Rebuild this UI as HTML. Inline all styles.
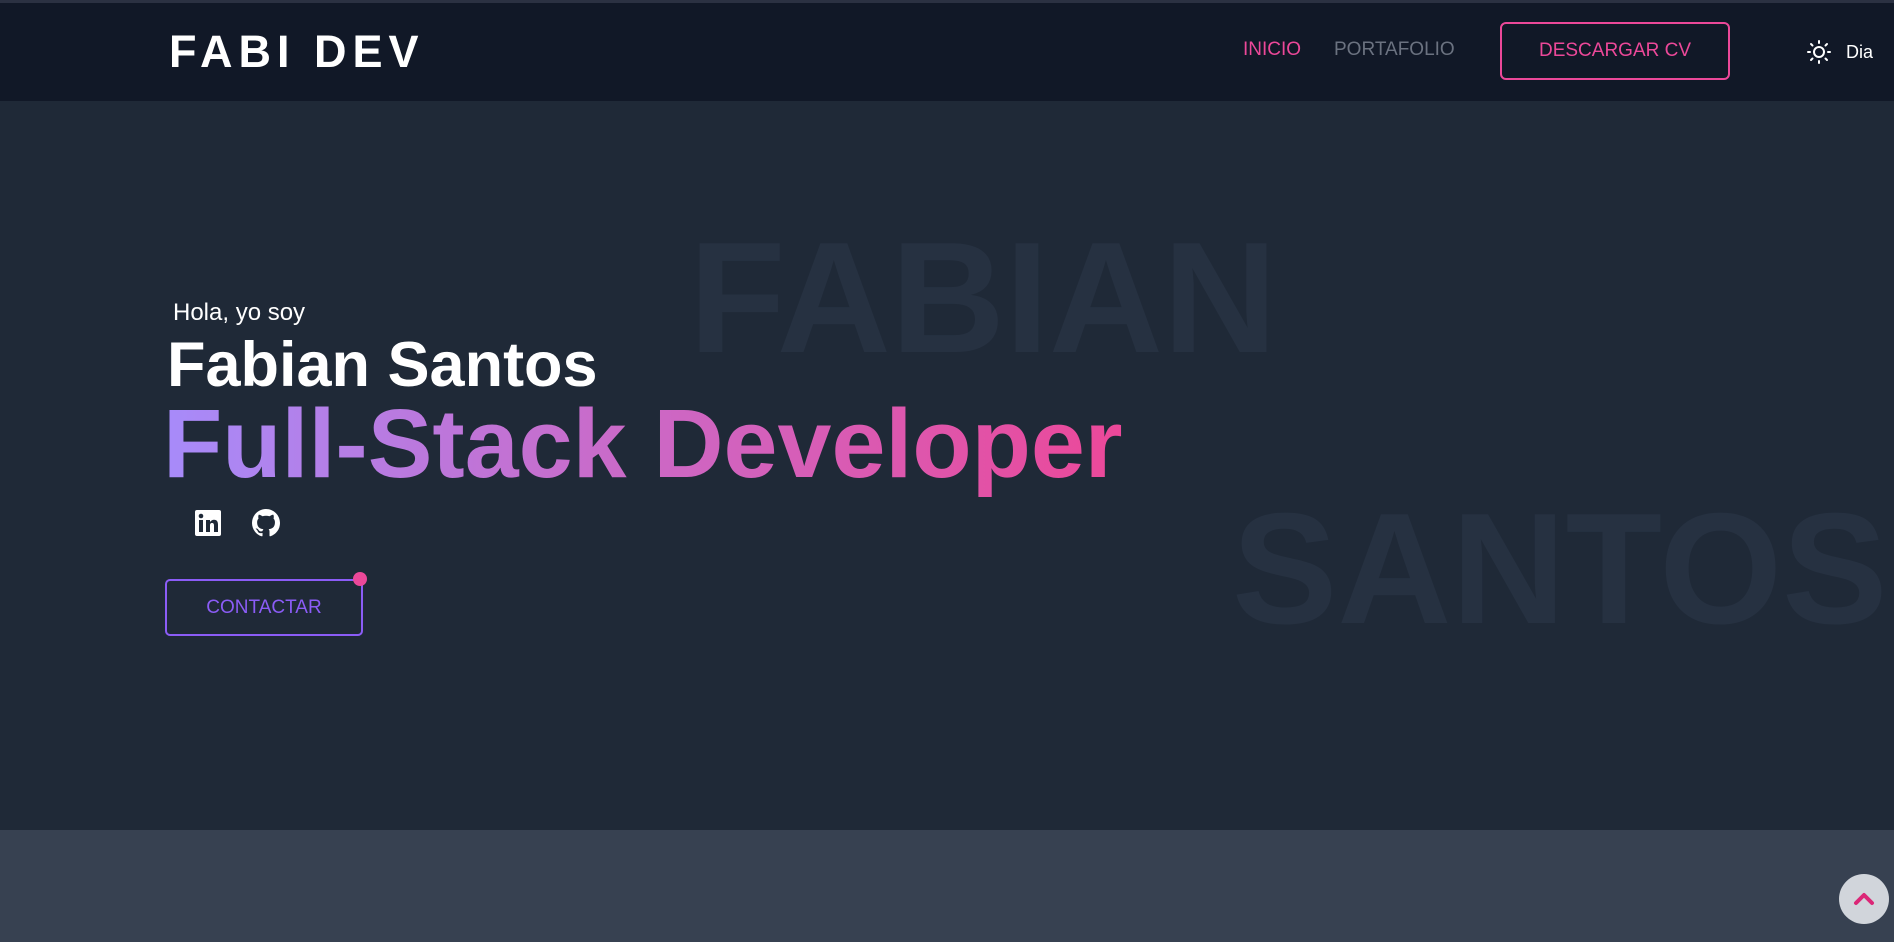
<!DOCTYPE html>
<html><head><meta charset="utf-8"><style>
*{margin:0;padding:0;box-sizing:border-box}
body{width:1894px;height:942px;overflow:hidden;background:#1f2937;font-family:"Liberation Sans",sans-serif;position:relative}
.nav{position:absolute;left:0;top:0;width:1894px;height:101px;background:#111827;border-top:3px solid #2b3142}
.hero{position:absolute;left:0;top:101px;width:1894px;height:729px;background:#1f2937}
.bottom{position:absolute;left:0;top:830px;width:1894px;height:112px;background:#374151}
.abs{position:absolute;white-space:nowrap}
</style></head><body>
<div class="nav"></div>
<div class="hero"></div>
<div class="bottom"></div>
<div class="abs" style="left:169px;top:29px;font-size:45px;font-weight:bold;color:#fff;letter-spacing:6px;line-height:46px">FABI DEV</div>
<div class="abs" style="left:1243px;top:39px;font-size:19px;color:#ec4899;line-height:22px">INICIO</div>
<div class="abs" style="left:1334px;top:39px;font-size:19px;color:#6b7280;line-height:22px">PORTAFOLIO</div>
<div class="abs" style="left:1500px;top:22px;width:230px;height:58px;border:2px solid #ec4899;border-radius:6px;color:#ec4899;font-size:19px;line-height:54px;text-align:center">DESCARGAR CV</div>
<svg class="abs" style="left:1806px;top:39px" width="26" height="26" viewBox="0 0 26 26" fill="none" stroke="#fff" stroke-width="2" stroke-linecap="round"><circle cx="13" cy="13" r="5"/><path d="M13 2v2M13 22v2M2 13h2M22 13h2M5 5l1.5 1.5M19.5 19.5L21 21M5 21l1.5-1.5M19.5 6.5L21 5"/></svg>
<div class="abs" style="left:1846px;top:41px;font-size:18px;color:#fff;line-height:22px">Dia</div>
<div class="abs" style="left:689px;top:219px;font-size:158px;font-weight:bold;color:#263141;line-height:158px">FABIAN</div>
<div class="abs" style="left:1232px;top:490px;font-size:158px;font-weight:bold;color:#263141;line-height:158px">SANTOS</div>
<div class="abs" style="left:173px;top:299px;font-size:24px;color:#fff;line-height:28px">Hola, yo soy</div>
<div class="abs" style="left:167px;top:330px;font-size:63px;font-weight:bold;color:#fff;line-height:70px">Fabian Santos</div>
<div class="abs" style="left:163px;top:389px;font-size:97px;font-weight:bold;line-height:110px;background:linear-gradient(90deg,#a78bfa,#c56fcf 40%,#ec4899);-webkit-background-clip:text;background-clip:text;color:transparent">Full-Stack Developer</div>
<svg class="abs" style="left:195px;top:510px" width="26" height="26" viewBox="0 0 26 26"><rect width="26" height="26" rx="2" fill="#fff"/><rect x="4" y="10" width="4" height="12" fill="#1f2937"/><circle cx="6" cy="6" r="2.3" fill="#1f2937"/><path d="M11 10h4v2c1-1.5 2.5-2.3 4-2.3 3 0 4 2 4 5V22h-4v-6.5c0-1.5-.5-2.5-2-2.5s-2 1-2 2.5V22h-4z" fill="#1f2937"/></svg>
<svg class="abs" style="left:252px;top:509px" width="28" height="28" viewBox="0 0 16 16"><path fill="#fff" d="M8 0C3.580 0 0 3.58 0 8c0 3.54 2.29 6.53 5.47 7.59.4.07.55-.17.55-.38 0-.19-.01-.82-.01-1.490-2.01.37-2.53-.49-2.69-.94-.09-.23-.48-.94-.82-1.13-.28-.15-.68-.52-.01-.53.63-.01 1.08.58 1.23.82.72 1.21 1.87.87 2.33.66.07-.52.28-.87.51-1.07-1.78-.2-3.64-.89-3.64-3.95 0-.87.31-1.59.82-2.15-.08-.2-.36-1.02.08-2.12 0 0 .67-.21 2.2.82.64-.18 1.32-.27 2-.27.68 0 1.36.09 2 .27 1.53-1.04 2.2-.82 2.2-.82.44 1.1.16 1.92.08 2.12.51.56.82 1.27.82 2.15 0 3.07-1.87 3.75-3.65 3.95.29.25.54.73.54 1.48 0 1.07-.01 1.93-.01 2.2 0 .21.15.46.55.38A8.013 8.013 0 0016 8c0-4.42-3.58-8-8-8z"/></svg>
<div class="abs" style="left:165px;top:579px;width:198px;height:57px;border:2px solid #8b5cf6;border-radius:5px;color:#8b5cf6;font-size:19px;line-height:53px;text-align:center">CONTACTAR</div>
<div class="abs" style="left:353px;top:572px;width:14px;height:14px;border-radius:50%;background:#ec4899"></div>
<div class="abs" style="left:1839px;top:874px;width:50px;height:50px;border-radius:50%;background:#d1d5db"></div>
<svg class="abs" style="left:1852px;top:887px" width="24" height="24" viewBox="0 0 24 24" fill="none" stroke="#db2777" stroke-width="4" stroke-linecap="round" stroke-linejoin="round"><path d="M4 16l8-8 8 8"/></svg>
</body></html>
